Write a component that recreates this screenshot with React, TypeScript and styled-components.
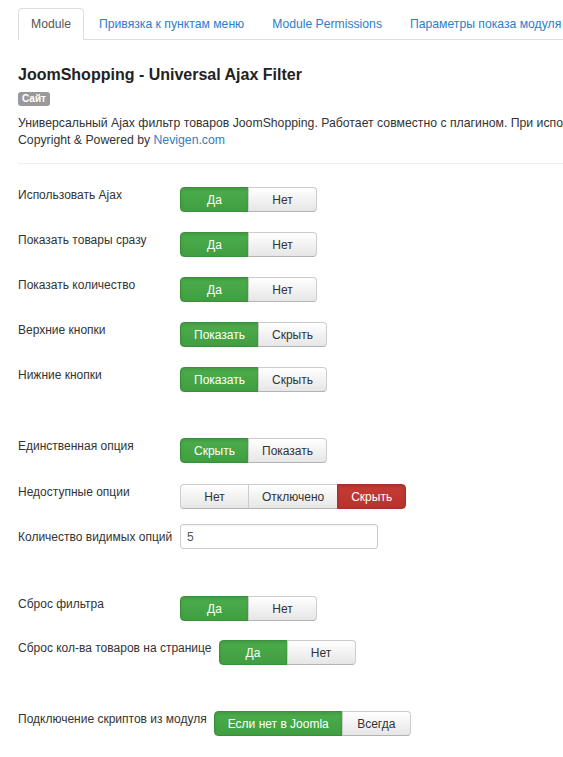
import React from 'react';
import styled, { createGlobalStyle, css } from 'styled-components';

const GlobalStyle = createGlobalStyle`
  html, body {
    margin: 0;
    padding: 0;
    background: #fff;
  }
  body {
    font-family: "Liberation Sans", Arial, sans-serif;
    font-size: 12px;
    color: #333;
    overflow: hidden;
  }
`;

const Page = styled.div`
  padding: 8px 0 0 18px;
  width: 545px;
  overflow: hidden;
`;

const Tabs = styled.ul`
  display: flex;
  margin: 0;
  padding: 0;
  list-style: none;
  border-bottom: 1px solid #ddd;
  white-space: nowrap;
`;

const Tab = styled.li<{ active?: boolean }>`
  flex: 0 0 auto;
  margin: 0 2px -1px 0;
  padding: 6px 12px;
  line-height: 18px;
  font-size: 12.2px;
  border: 1px solid transparent;
  border-radius: 4px 4px 0 0;
  color: #2f7dc4;
  ${(p) =>
    p.active &&
    css`
      color: #555;
      background: #fff;
      border-color: #ddd #ddd transparent;
    `}
`;

const Title = styled.h2`
  margin: 24px 0 6px;
  font-size: 16px;
  line-height: 21px;
  font-weight: bold;
  color: #222;
`;

const Badge = styled.span`
  display: inline-block;
  padding: 1px 4px;
  font-size: 10px;
  line-height: 12px;
  font-weight: bold;
  color: #fff;
  background: #999;
  border-radius: 3px;
`;

const Description = styled.p`
  margin: 9px 0 0;
  font-size: 12.25px;
  line-height: 17px;
  white-space: nowrap;
  color: #333;
`;

const Link = styled.a`
  color: #2f7dc4;
  text-decoration: none;
`;

const Divider = styled.hr`
  margin: 14px 0 23px;
  border: 0;
  border-top: 1px solid #eee;
`;

const Form = styled.div`
  display: flex;
  flex-direction: column;
`;

const Row = styled.div<{ after?: number }>`
  display: flex;
  align-items: flex-start;
  margin-bottom: ${(p) => (p.after ?? 20)}px;
`;

const Label = styled.div<{ offset?: number }>`
  flex: 0 0 auto;
  min-width: 162px;
  box-sizing: border-box;
  padding: ${(p) => p.offset ?? 0}px 7px 0 0;
  line-height: 16px;
  color: #333;
`;

const ButtonGroup = styled.div`
  display: flex;
`;

type Tone = 'default' | 'success' | 'danger';

const tones = {
  default: css`
    color: #333;
    background: linear-gradient(#ffffff, #e6e6e6);
    border-color: #cccccc #cccccc #b3b3b3;
  `,
  success: css`
    color: #fff;
    background: linear-gradient(#4cae4c, #409e40);
    border-color: #3a8f3a;
    box-shadow: inset 0 2px 3px rgba(0, 0, 0, 0.12);
  `,
  danger: css`
    color: #fff;
    background: linear-gradient(#c43c35, #b8332c);
    border-color: #a4302a;
    box-shadow: inset 0 2px 3px rgba(0, 0, 0, 0.12);
  `,
};

const Button = styled.div<{ tone: Tone }>`
  box-sizing: border-box;
  min-width: 69px;
  height: 25px;
  padding: 0 13px;
  display: flex;
  align-items: center;
  justify-content: center;
  font-size: 12px;
  border: 1px solid;
  margin-left: -1px;
  white-space: nowrap;
  ${(p) => tones[p.tone]}

  &:first-child {
    margin-left: 0;
    border-radius: 4px 0 0 4px;
  }
  &:last-child {
    border-radius: 0 4px 4px 0;
  }
`;

const Input = styled.div`
  box-sizing: border-box;
  width: 198px;
  height: 25px;
  padding: 0 6px;
  display: flex;
  align-items: center;
  border: 1px solid #ccc;
  border-radius: 3px;
  color: #555;
  box-shadow: inset 0 1px 1px rgba(0, 0, 0, 0.05);
`;

const Spacer = styled.div<{ size: number }>`
  height: ${(p) => p.size}px;
`;

type Choice = { text: string; tone: Tone };

function Toggle({ items }: { items: Choice[] }) {
  return (
    <ButtonGroup>
      {items.map((it) => (
        <Button key={it.text} tone={it.tone}>
          {it.text}
        </Button>
      ))}
    </ButtonGroup>
  );
}

const yesNo: Choice[] = [
  { text: 'Да', tone: 'success' },
  { text: 'Нет', tone: 'default' },
];

const showHide: Choice[] = [
  { text: 'Показать', tone: 'success' },
  { text: 'Скрыть', tone: 'default' },
];

export default function App() {
  return (
    <>
      <GlobalStyle />
      <Page>
        <Tabs>
          <Tab active>Module</Tab>
          <Tab>Привязка к пунктам меню</Tab>
          <Tab>Module Permissions</Tab>
          <Tab>Параметры показа модуля</Tab>
        </Tabs>

        <Title>JoomShopping - Universal Ajax Filter</Title>
        <Badge>Сайт</Badge>
        <Description>
          Универсальный Ajax фильтр товаров JoomShopping. Работает совместно с плагином. При использовании
          <br />
          Copyright &amp; Powered by <Link>Nevigen.com</Link>
        </Description>
        <Divider />

        <Form>
          <Row>
            <Label>Использовать Ajax</Label>
            <Toggle items={yesNo} />
          </Row>
          <Row>
            <Label>Показать товары сразу</Label>
            <Toggle items={yesNo} />
          </Row>
          <Row>
            <Label>Показать количество</Label>
            <Toggle items={yesNo} />
          </Row>
          <Row>
            <Label>Верхние кнопки</Label>
            <Toggle items={showHide} />
          </Row>
          <Row>
            <Label>Нижние кнопки</Label>
            <Toggle items={showHide} />
          </Row>
          <Spacer size={26} />
          <Row after={21}>
            <Label>Единственная опция</Label>
            <Toggle
              items={[
                { text: 'Скрыть', tone: 'success' },
                { text: 'Показать', tone: 'default' },
              ]}
            />
          </Row>
          <Row after={15}>
            <Label>Недоступные опции</Label>
            <Toggle
              items={[
                { text: 'Нет', tone: 'default' },
                { text: 'Отключено', tone: 'default' },
                { text: 'Скрыть', tone: 'danger' },
              ]}
            />
          </Row>
          <Row>
            <Label offset={5}>Количество видимых опций</Label>
            <Input>5</Input>
          </Row>
          <Spacer size={27} />
          <Row after={19}>
            <Label>Сброс фильтра</Label>
            <Toggle items={yesNo} />
          </Row>
          <Row>
            <Label>Сброс кол-ва товаров на странице</Label>
            <Toggle items={yesNo} />
          </Row>
          <Spacer size={26} />
          <Row>
            <Label>Подключение скриптов из модуля</Label>
            <Toggle
              items={[
                { text: 'Если нет в Joomla', tone: 'success' },
                { text: 'Всегда', tone: 'default' },
              ]}
            />
          </Row>
        </Form>
      </Page>
    </>
  );
}
